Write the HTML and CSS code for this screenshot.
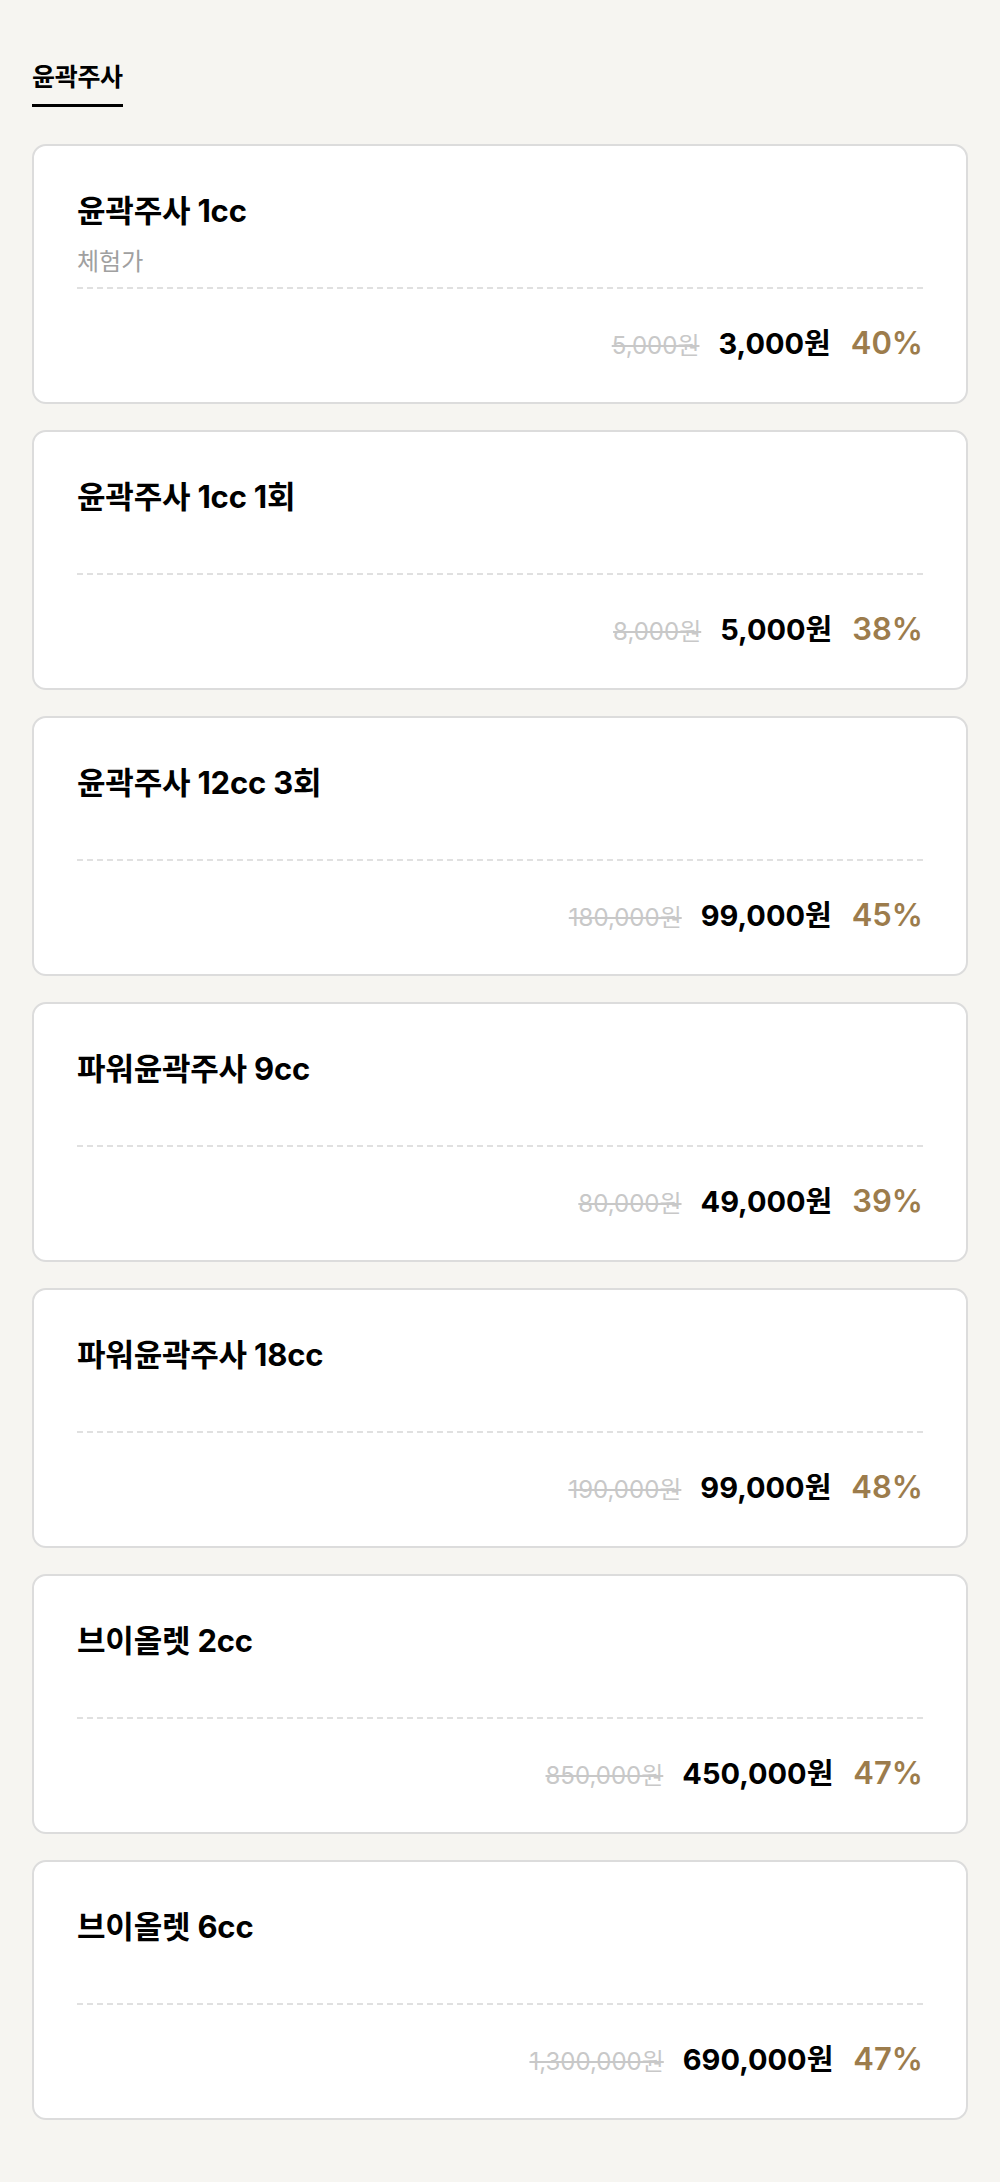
FILE: index.html
```html
<!DOCTYPE html>
<html lang="ko">
<head>
<meta charset="UTF-8"><meta name="viewport" content="width=device-width,initial-scale=1">
<title>윤곽주사</title>
<link rel="stylesheet" href="styles.css">
</head>
<body>
<main class="page">
  <nav class="tabs">
    <span class="tab active">윤곽주사</span>
  </nav>
  <section class="list">
    <article class="item">
      <h4>윤곽주사 1cc</h4>
      <p class="sub">체험가</p>
      <div class="price"><s>5,000원</s><b>3,000원</b><em>40%</em></div>
    </article>
    <article class="item">
      <h4>윤곽주사 1cc 1회</h4>
      <p class="sub"></p>
      <div class="price"><s>8,000원</s><b>5,000원</b><em>38%</em></div>
    </article>
    <article class="item">
      <h4>윤곽주사 12cc 3회</h4>
      <p class="sub"></p>
      <div class="price"><s>180,000원</s><b>99,000원</b><em>45%</em></div>
    </article>
    <article class="item">
      <h4>파워윤곽주사 9cc</h4>
      <p class="sub"></p>
      <div class="price"><s>80,000원</s><b>49,000원</b><em>39%</em></div>
    </article>
    <article class="item">
      <h4>파워윤곽주사 18cc</h4>
      <p class="sub"></p>
      <div class="price"><s>190,000원</s><b>99,000원</b><em>48%</em></div>
    </article>
    <article class="item">
      <h4>브이올렛 2cc</h4>
      <p class="sub"></p>
      <div class="price"><s>850,000원</s><b>450,000원</b><em>47%</em></div>
    </article>
    <article class="item">
      <h4>브이올렛 6cc</h4>
      <p class="sub"></p>
      <div class="price"><s>1,300,000원</s><b>690,000원</b><em>47%</em></div>
    </article>
  </section>
</main>
</body>
</html>
```

FILE: styles.css
```css
:root{--bg:#f6f5f1;--line:#dcdcdc;--gold:#9c7c4c;--muted:#a0a0a0}
body{margin:0;background:var(--bg);color:#000;font-family:Inter,"Noto Sans CJK KR",sans-serif}
.page{padding:60px 32px 62px}
.tabs{display:flex;margin-bottom:37px}
.tab{font-size:25px;font-weight:700;line-height:34px;padding-bottom:10px;border-bottom:3px solid #000;letter-spacing:-.3px}
.list{display:flex;flex-direction:column;gap:26px}
.item{background:#fff;border:2px solid var(--line);border-radius:14px;padding:45px 43px 0;height:260px;box-sizing:border-box}
.item h4{margin:0;font-size:31px;font-weight:700;line-height:40px;letter-spacing:-.2px}
.sub{margin:14px 0 0;height:34px;padding-bottom:8px;font-size:24px;line-height:34px;color:var(--muted);border-bottom:2px dashed #e0e0e0}
.price{display:flex;justify-content:flex-end;align-items:baseline;gap:19px;margin-top:34px;line-height:40px}
.price s{font-size:24px;color:#c8c8c8}
.price b{font-size:29px;font-weight:700}
.price em{font-style:normal;font-size:31px;font-weight:600;color:var(--gold);margin-left:1px}
```
